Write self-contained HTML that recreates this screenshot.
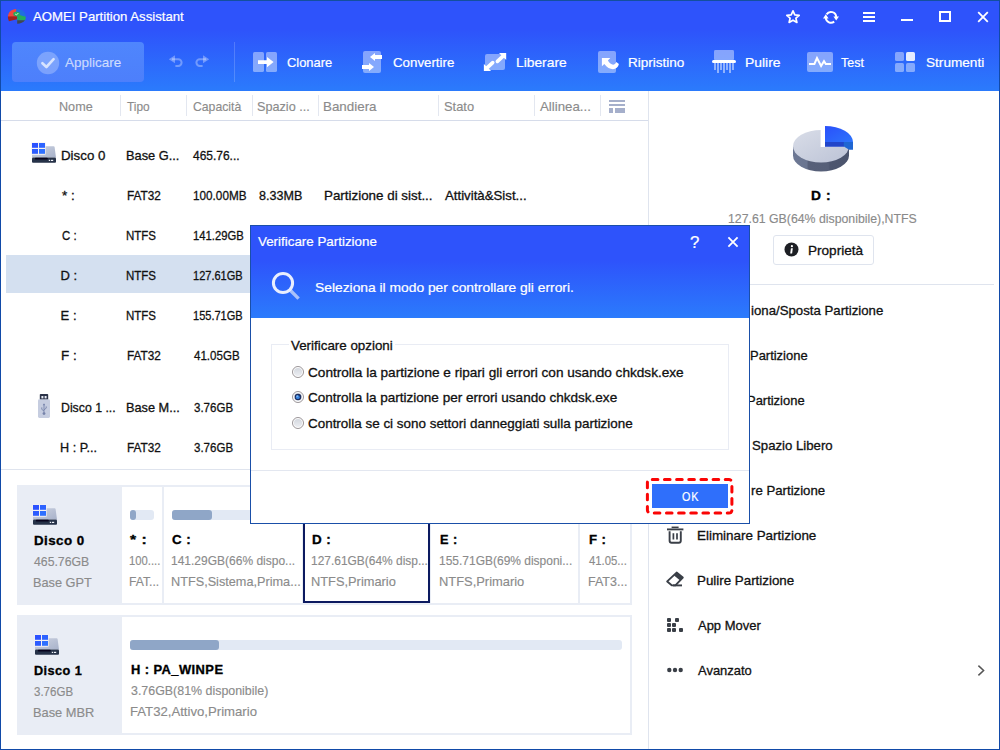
<!DOCTYPE html>
<html lang="it">
<head>
<meta charset="utf-8">
<title>AOMEI Partition Assistant</title>
<style>
*{box-sizing:border-box}
html,body{margin:0;padding:0}
body{width:1000px;height:750px;overflow:hidden;background:#fff;position:relative;font-family:"Liberation Sans",sans-serif;font-size:13px;color:#111}
.a{position:absolute}
.t{position:absolute;white-space:nowrap;line-height:16px;height:16px;transform-origin:0 50%;-webkit-text-stroke:.3px currentColor}
.w{color:#fff;-webkit-text-stroke:.2px currentColor}
.g{color:#8b8b8b;-webkit-text-stroke:.15px currentColor}
.b{font-weight:bold;color:#000}
#win{position:absolute;left:0;top:0;width:1000px;height:750px;border:1px solid #114aa8;border-top-color:#134f9f;overflow:hidden}
#hdr{position:absolute;left:1px;top:1px;width:998px;height:90px;background:linear-gradient(#2e53fb 0px,#2e53fb 28px,#2b7bfc 90px)}
</style>
<style id="tune">
#ttl{transform:scaleX(1.013);margin-left:0.0px;margin-top:0px}
#tb0{transform:scaleX(1.037);margin-left:0.5px;margin-top:1px}
#tb1{transform:scaleX(0.993);margin-left:-0.2px;margin-top:1px}
#tb2{transform:scaleX(1.023);margin-left:0.4px;margin-top:1px}
#tb3{transform:scaleX(1.062);margin-left:-1.3px;margin-top:1px}
#tb4{transform:scaleX(1.040);margin-left:-0.4px;margin-top:1px}
#tb5{transform:scaleX(1.069);margin-left:-0.5px;margin-top:1px}
#tb6{transform:scaleX(0.958);margin-left:0.0px;margin-top:1px}
#tb7{transform:scaleX(1.046);margin-left:-0.5px;margin-top:1px}
#h0{transform:scaleX(0.971);margin-left:-0.6px;margin-top:1px}
#h1{transform:scaleX(0.912);margin-left:0.7px;margin-top:1px}
#h2{transform:scaleX(0.940);margin-left:0.7px;margin-top:1px}
#h3{transform:scaleX(0.973);margin-left:-0.6px;margin-top:1px}
#h4{transform:scaleX(1.029);margin-left:-1.0px;margin-top:1px}
#h5{transform:scaleX(0.990);margin-left:-0.2px;margin-top:1px}
#h6{transform:scaleX(1.020);margin-left:0.0px;margin-top:1px}
#r0c0{transform:scaleX(1.024);margin-left:-0.4px;margin-top:1px}
#r0c1{transform:scaleX(0.985);margin-left:-0.6px;margin-top:1px}
#r0c2{transform:scaleX(0.920);margin-left:0.4px;margin-top:1px}
#r1c0{transform:scaleX(1.033);margin-left:0.6px;margin-top:1px}
#r1c1{transform:scaleX(0.906);margin-left:-0.5px;margin-top:1px}
#r1c2{transform:scaleX(0.903);margin-left:-0.3px;margin-top:1px}
#r1c3{transform:scaleX(0.967);margin-left:0.0px;margin-top:1px}
#r1c4{transform:scaleX(1.029);margin-left:-1.0px;margin-top:1px}
#r1c5{transform:scaleX(1.018);margin-left:0.0px;margin-top:1px}
#r2c0{transform:scaleX(0.875);margin-left:0.6px;margin-top:1px}
#r2c1{transform:scaleX(0.885);margin-left:-0.7px;margin-top:1px}
#r2c2{transform:scaleX(0.867);margin-left:-0.3px;margin-top:1px}
#r3c0{transform:scaleX(1.000);margin-left:-0.4px;margin-top:1px}
#r3c1{transform:scaleX(0.885);margin-left:-0.7px;margin-top:1px}
#r3c2{transform:scaleX(0.849);margin-left:-0.2px;margin-top:1px}
#r4c0{transform:scaleX(1.000);margin-left:-0.4px;margin-top:1px}
#r4c1{transform:scaleX(0.885);margin-left:-0.7px;margin-top:1px}
#r4c2{transform:scaleX(0.849);margin-left:-0.2px;margin-top:1px}
#r5c0{transform:scaleX(1.031);margin-left:-0.4px;margin-top:1px}
#r5c1{transform:scaleX(0.906);margin-left:-0.5px;margin-top:1px}
#r5c2{transform:scaleX(0.890);margin-left:0.6px;margin-top:1px}
#r6c0{transform:scaleX(0.946);margin-left:-0.3px;margin-top:1px}
#r6c1{transform:scaleX(0.981);margin-left:-0.6px;margin-top:1px}
#r6c2{transform:scaleX(0.886);margin-left:0.6px;margin-top:1px}
#r7c0{transform:scaleX(0.972);margin-left:-0.6px;margin-top:1px}
#r7c1{transform:scaleX(0.906);margin-left:-0.5px;margin-top:1px}
#r7c2{transform:scaleX(0.886);margin-left:0.6px;margin-top:1px}
#rp0{transform:scaleX(1.150);margin-left:0.2px;margin-top:0px}
#rp1{transform:scaleX(0.946);margin-left:-0.6px;margin-top:0px}
#rp2{transform:scaleX(1.044);margin-left:-0.6px;margin-top:1px}
#ri0{transform:scaleX(1.017);margin-left:0.2px;margin-top:1px}
#ri1{transform:scaleX(0.996);margin-left:-0.8px;margin-top:1px}
#ri2{transform:scaleX(0.996);margin-left:-3.6px;margin-top:1px}
#ri3{transform:scaleX(1.015);margin-left:1.2px;margin-top:1px}
#ri4{transform:scaleX(1.016);margin-left:0.2px;margin-top:1px}
#ri0p{transform:scaleX(0.977);margin-left:-0.3px;margin-top:1px}
#ri1p{transform:scaleX(1.006);margin-left:-0.3px;margin-top:1px}
#ri2p{transform:scaleX(0.984);margin-left:0.7px;margin-top:1px}
#ri3p{transform:scaleX(1.070);margin-left:0.7px;margin-top:1px}
#ri4p{transform:scaleX(1.006);margin-left:-0.3px;margin-top:1px}
#ri5{transform:scaleX(1.032);margin-left:-0.3px;margin-top:1px}
#ri6{transform:scaleX(1.027);margin-left:-0.3px;margin-top:1px}
#ri7{transform:scaleX(0.998);margin-left:0.7px;margin-top:1px}
#ri8{transform:scaleX(0.996);margin-left:0.7px;margin-top:1px}
#d0a{transform:scaleX(1.111);margin-left:0.7px;margin-top:0.5px}
#d0b{transform:scaleX(0.943);margin-left:0.7px;margin-top:1px}
#d0c{transform:scaleX(0.980);margin-left:-0.3px;margin-top:1px}
#p0a{transform:scaleX(1.308);margin-left:0.3px;margin-top:-0.5px}
#p0b{transform:scaleX(0.865);margin-left:-0.9px;margin-top:0px}
#p0c{transform:scaleX(0.935);margin-left:-0.9px;margin-top:0px}
#p1a{transform:scaleX(1.113);margin-left:0.0px;margin-top:-0.5px}
#p1b{transform:scaleX(0.923);margin-left:-0.9px;margin-top:0px}
#p1c{transform:scaleX(0.976);margin-left:-1.0px;margin-top:0px}
#p2a{transform:scaleX(1.119);margin-left:0.6px;margin-top:-0.5px}
#p2b{transform:scaleX(0.919);margin-left:-0.3px;margin-top:0px}
#p2c{transform:scaleX(0.987);margin-left:-0.4px;margin-top:0px}
#p3a{transform:scaleX(1.062);margin-left:0.0px;margin-top:-0.5px}
#p3b{transform:scaleX(0.922);margin-left:-0.9px;margin-top:0px}
#p3c{transform:scaleX(0.992);margin-left:-1.0px;margin-top:0px}
#p4a{transform:scaleX(1.100);margin-left:0.5px;margin-top:-0.5px}
#p4b{transform:scaleX(0.872);margin-left:0.5px;margin-top:0px}
#p4c{transform:scaleX(0.962);margin-left:-0.5px;margin-top:0px}
#d1a{transform:scaleX(1.058);margin-left:0.8px;margin-top:0.5px}
#d1b{transform:scaleX(0.886);margin-left:0.8px;margin-top:1px}
#d1c{transform:scaleX(0.987);margin-left:-0.2px;margin-top:1px}
#p5a{transform:scaleX(1.076);margin-left:0.5px;margin-top:-0.5px}
#p5b{transform:scaleX(0.955);margin-left:0.5px;margin-top:0px}
#p5c{transform:scaleX(1.012);margin-left:-0.5px;margin-top:0px}
#dg0{transform:scaleX(1.028);margin-left:0.5px;margin-top:0px}
#dgq{transform:scaleX(1.050);margin-left:-1.0px;margin-top:1px}
#dg1{transform:scaleX(1.063);margin-left:-0.4px;margin-top:1px}
#dg2{transform:scaleX(1.028);margin-left:0.0px;margin-top:0px}
#dr0{transform:scaleX(1.046);margin-left:-0.8px;margin-top:1px}
#dr1{transform:scaleX(1.041);margin-left:-0.8px;margin-top:1px}
#dr2{transform:scaleX(1.033);margin-left:-0.8px;margin-top:1px}
#dgok{transform:scaleX(0.830);margin-left:0.7px;margin-top:1px}
</style>
</head>
<body>
<div id="hdr"></div>
<!-- title bar -->
<svg class="a" style="left:7px;top:8px" width="20" height="17" viewBox="0 0 20 17">
 <path d="M9.3 0.9 C14.5 0.6 19 3.8 19 9 L9.3 9 Z" fill="#1f6fe0"/>
 <path d="M9.2 1 C4.5 1.2 1 4 0.9 9.2 L9.2 9.2 Z" fill="#f0483e"/>
 <path d="M0.9 8.6 L10 8.2 L10 11.2 L2 13.2 C1.2 12 0.9 10 0.9 8.6Z" fill="#a3231c"/>
 <path d="M6.2 5 C7.5 3.6 11 3.4 12.6 4.6 L13.2 7.2 L18.7 8.8 C18.9 10.5 18.5 11.6 17.8 12.5 L10.2 12.5 L10.2 8.6 L6.6 7.6 Z" fill="#25ad5c"/>
 <path d="M10.2 12.3 L17.9 12.3 C16.5 14.6 13 15.9 10.2 15.8 Z" fill="#414851"/>
 <path d="M8.2 6 L9.4 7 L11.4 5" stroke="#d8f0d8" stroke-width="1" fill="none"/>
</svg>
<div class="t w" id="ttl" style="left:33px;top:9px;font-size:13px">AOMEI Partition Assistant</div>
<svg class="a" style="left:784px;top:8px" width="18" height="18" viewBox="0 0 18 18"><path d="M9 2.9 L10.8 6.9 L15.2 7.3 L11.9 10.2 L12.9 14.4 L9 12.2 L5.1 14.4 L6.1 10.2 L2.8 7.3 L7.2 6.9 Z" fill="none" stroke="#fff" stroke-width="1.7" stroke-linejoin="round"/></svg>
<svg class="a" style="left:822px;top:8px" width="18" height="18" viewBox="0 0 18 18"><g fill="none" stroke="#fff" stroke-width="2"><path d="M4.6 6.4 A5.2 5.2 0 0 1 14.2 9"/><path d="M12.2 13.6 A5.2 5.2 0 0 1 3.8 10"/></g><path d="M1 10.4 L6.6 10.4 L3.8 6.2 Z M11.4 8.4 L17 8.4 L14.2 12.6 Z" fill="#fff"/></svg>
<div class="a" style="left:863px;top:12px;width:12px;height:2px;background:#fff;box-shadow:0 4px 0 #fff,0 8px 0 #fff"></div>
<div class="a" style="left:901px;top:19px;width:12px;height:2px;background:#fff"></div>
<div class="a" style="left:939px;top:11px;width:12px;height:11px;border:2px solid #fff"></div>
<svg class="a" style="left:977px;top:11px" width="12" height="12" viewBox="0 0 12 12"><path d="M1.2 1.2 L10.8 10.8 M10.8 1.2 L1.2 10.8" stroke="#fff" stroke-width="1.8"/></svg>

<!-- toolbar -->
<div class="a" style="left:12px;top:42px;width:132px;height:40px;border-radius:4px;background:linear-gradient(#4f86fd,#4d7ffb)"></div>
<svg class="a" style="left:36px;top:51px" width="24" height="24" viewBox="0 0 24 24"><circle cx="12" cy="12" r="11.2" fill="rgba(255,255,255,.26)"/><path d="M6.4 12.2 L10.4 16 L17.6 8.2" fill="none" stroke="rgba(255,255,255,.7)" stroke-width="2.6" stroke-linecap="round" stroke-linejoin="round"/></svg>
<div class="t" id="tb0" style="left:64px;top:54px;font-size:13px;color:rgba(255,255,255,.68);-webkit-text-stroke:.15px currentColor">Applicare</div>
<svg class="a" style="left:168px;top:54px" width="16" height="14" viewBox="0 0 16 14"><path d="M4 5.2 H10.2 A3.4 3.4 0 0 1 10.2 12 H7.4" fill="none" stroke="rgba(255,255,255,.33)" stroke-width="2"/><path d="M0.8 5.2 L7 1.2 L7 9.2 Z" fill="rgba(255,255,255,.33)"/></svg>
<svg class="a" style="left:194px;top:54px" width="16" height="14" viewBox="0 0 16 14"><path d="M12 5.2 H5.8 A3.4 3.4 0 0 0 5.8 12 H8.6" fill="none" stroke="rgba(255,255,255,.33)" stroke-width="2"/><path d="M15.2 5.2 L9 1.2 L9 9.2 Z" fill="rgba(255,255,255,.33)"/></svg>
<div class="a" style="left:234px;top:42px;width:1px;height:40px;background:rgba(255,255,255,.18)"></div>
<!-- Clonare -->
<svg class="a" style="left:253px;top:51px" width="24" height="22" viewBox="0 0 24 22"><rect x="0" y="1" width="11" height="20" rx="1.6" fill="rgba(255,255,255,.42)"/><rect x="13" y="1" width="11" height="20" rx="1.6" fill="rgba(255,255,255,.42)"/><path d="M5 9.2 H14 V6 L20.6 11.1 L14 16.2 V13 H5 Z" fill="#fff"/></svg>
<div class="t w" id="tb1" style="left:287px;top:54px;font-size:13px">Clonare</div>
<!-- Convertire -->
<svg class="a" style="left:361px;top:50px" width="22" height="24" viewBox="0 0 22 24"><rect x="2" y="1" width="18" height="22" rx="2" fill="rgba(255,255,255,.42)"/><path d="M21 5.1 H14 V3 L9 7 L14 11 V8.9 H21 Z" fill="#fff"/><path d="M1 15 H8 V13 L13 17 L8 21 V19 H1 Z" fill="#fff"/></svg>
<div class="t w" id="tb2" style="left:393px;top:54px;font-size:13px">Convertire</div>
<!-- Liberare -->
<svg class="a" style="left:483px;top:52px" width="24" height="20" viewBox="0 0 24 20"><rect x="2" y="2" width="20" height="16" rx="2" fill="rgba(255,255,255,.42)"/><path d="M16 0.9 H23.2 V8.1 Z" fill="#fff"/><path d="M20.6 3.6 L14.4 9.4" stroke="#fff" stroke-width="3.6" stroke-linecap="round"/><path d="M0.9 11.9 V19.1 H8.1 Z" fill="#fff"/><path d="M3.5 16.4 L9.7 10.6" stroke="#fff" stroke-width="3.6" stroke-linecap="round"/></svg>
<div class="t w" id="tb3" style="left:517px;top:54px;font-size:13px">Liberare</div>
<!-- Ripristino -->
<svg class="a" style="left:597px;top:50px" width="24" height="24" viewBox="0 0 24 24"><rect x="1" y="1" width="18" height="22" rx="2" fill="rgba(255,255,255,.42)"/><path d="M4.9 8 H13.3 L10.9 10.5 C13.4 14.6 17.2 16.6 19.3 12 L21.9 14 C20.6 20.8 12.4 21 7.3 14 L4.9 16.2 Z" fill="#fff"/></svg>
<div class="t w" id="tb4" style="left:628px;top:54px;font-size:13px">Ripristino</div>
<!-- Pulire -->
<svg class="a" style="left:712px;top:49px" width="24" height="25" viewBox="0 0 24 25"><rect x="2" y="1" width="20" height="10.4" rx="1.4" fill="rgba(255,255,255,.42)"/><g fill="rgba(255,255,255,.48)"><rect x="2" y="14" width="2" height="7"/><rect x="5" y="14" width="2" height="10"/><rect x="8" y="14" width="2" height="7"/><rect x="11" y="14" width="2" height="10"/><rect x="14" y="14" width="2" height="7"/><rect x="17" y="14" width="2" height="10"/><rect x="20" y="14" width="2" height="7"/></g><rect x="0" y="11" width="24" height="3.1" rx="1.5" fill="#fff"/></svg>
<div class="t w" id="tb5" style="left:745px;top:54px;font-size:13px">Pulire</div>
<!-- Test -->
<svg class="a" style="left:807px;top:52px" width="26" height="20" viewBox="0 0 26 20"><rect x="0" y="0" width="26" height="20" rx="2" fill="rgba(255,255,255,.42)"/><path d="M2 12 H7.4 L10 6 L14.1 14 L17 9.2 L18.8 12 H24" fill="none" stroke="#fff" stroke-width="2" stroke-linejoin="miter"/></svg>
<div class="t w" id="tb6" style="left:841px;top:54px;font-size:13px">Test</div>
<!-- Strumenti -->
<svg class="a" style="left:895px;top:52px" width="21" height="20" viewBox="0 0 21 20"><rect x="0" y="0" width="9" height="9" rx="1.6" fill="rgba(255,255,255,.42)"/><rect x="11" y="0" width="9" height="9" rx="1.6" fill="rgba(255,255,255,.88)"/><rect x="0" y="11" width="9" height="9" rx="1.6" fill="rgba(255,255,255,.42)"/><rect x="11" y="11" width="9" height="9" rx="1.6" fill="rgba(255,255,255,.42)"/></svg>
<div class="t w" id="tb7" style="left:926px;top:54px;font-size:13px">Strumenti</div>

<!-- table header -->
<div class="a" style="left:1px;top:120px;width:647px;height:1px;background:#d6dcea"></div>
<div class="a" style="left:648px;top:91px;width:1px;height:658px;background:#dfe4ee"></div>
<div class="a" style="left:120px;top:95px;width:1px;height:21px;background:#e3e7f0"></div>
<div class="a" style="left:186px;top:95px;width:1px;height:21px;background:#e3e7f0"></div>
<div class="a" style="left:252px;top:95px;width:1px;height:21px;background:#e3e7f0"></div>
<div class="a" style="left:318px;top:95px;width:1px;height:21px;background:#e3e7f0"></div>
<div class="a" style="left:438px;top:95px;width:1px;height:21px;background:#e3e7f0"></div>
<div class="a" style="left:534px;top:95px;width:1px;height:21px;background:#e3e7f0"></div>
<div class="a" style="left:600px;top:95px;width:1px;height:21px;background:#e3e7f0"></div>
<div class="t g" id="h0" style="left:60px;top:98px">Nome</div>
<div class="t g" id="h1" style="left:126px;top:98px">Tipo</div>
<div class="t g" id="h2" style="left:192px;top:98px">Capacità</div>
<div class="t g" id="h3" style="left:258px;top:98px">Spazio ...</div>
<div class="t g" id="h4" style="left:324px;top:98px">Bandiera</div>
<div class="t g" id="h5" style="left:444px;top:98px">Stato</div>
<div class="t g" id="h6" style="left:540px;top:98px">Allinea...</div>
<svg class="a" style="left:608px;top:100px" width="18" height="13" viewBox="0 0 18 13"><g fill="#a5afcb"><rect x="1" y="0" width="16" height="2"/><rect x="1" y="4" width="16" height="2"/><rect x="1" y="8" width="4" height="5"/><rect x="7" y="8" width="10" height="5"/></g></svg>
<!-- selected row -->
<div class="a" style="left:6px;top:255px;width:300px;height:38px;background:#d4e0f0"></div>
<div class="t" id="r0c0" style="left:61px;top:147px">Disco 0</div>
<div class="t" id="r0c1" style="left:127px;top:147px">Base G...</div>
<div class="t" id="r0c2" style="left:193px;top:147px">465.76...</div>
<div class="t" id="r1c0" style="left:61px;top:187px">* :</div>
<div class="t" id="r1c1" style="left:127px;top:187px">FAT32</div>
<div class="t" id="r1c2" style="left:193px;top:187px">100.00MB</div>
<div class="t" id="r1c3" style="left:259px;top:187px">8.33MB</div>
<div class="t" id="r1c4" style="left:325px;top:187px">Partizione di sist...</div>
<div class="t" id="r1c5" style="left:445px;top:187px">Attività&amp;Sist...</div>
<div class="t" id="r2c0" style="left:61px;top:227px">C :</div>
<div class="t" id="r2c1" style="left:127px;top:227px">NTFS</div>
<div class="t" id="r2c2" style="left:193px;top:227px">141.29GB</div>
<div class="t" id="r3c0" style="left:61px;top:267px">D :</div>
<div class="t" id="r3c1" style="left:127px;top:267px">NTFS</div>
<div class="t" id="r3c2" style="left:193px;top:267px">127.61GB</div>
<div class="t" id="r4c0" style="left:61px;top:307px">E :</div>
<div class="t" id="r4c1" style="left:127px;top:307px">NTFS</div>
<div class="t" id="r4c2" style="left:193px;top:307px">155.71GB</div>
<div class="t" id="r5c0" style="left:61px;top:347px">F :</div>
<div class="t" id="r5c1" style="left:127px;top:347px">FAT32</div>
<div class="t" id="r5c2" style="left:193px;top:347px">41.05GB</div>
<div class="t" id="r6c0" style="left:61px;top:399px">Disco 1 ...</div>
<div class="t" id="r6c1" style="left:127px;top:399px">Base M...</div>
<div class="t" id="r6c2" style="left:193px;top:399px">3.76GB</div>
<div class="t" id="r7c0" style="left:61px;top:439px">H : P...</div>
<div class="t" id="r7c1" style="left:127px;top:439px">FAT32</div>
<div class="t" id="r7c2" style="left:193px;top:439px">3.76GB</div>
<svg class="a" style="left:31px;top:142px" width="26" height="22" viewBox="0 0 26 22">
<defs><linearGradient id="dg" x1="0" y1="0" x2="1" y2="1"><stop offset="0" stop-color="#ced4e2"/><stop offset="1" stop-color="#a8b2ca"/></linearGradient></defs>
<path d="M13.6 4.2 H22.6 Q23.4 4.2 23.6 5 L25 15.4 H1 V12.6 H13.6 Z" fill="url(#dg)"/>
<rect x="0.4" y="0.4" width="14.2" height="12.2" fill="#f3f1f4"/>
<rect x="1" y="15.4" width="24" height="5.4" rx="1" fill="#263248"/>
<rect x="3.8" y="15.8" width="13" height="1.8" rx=".8" fill="#07031c"/>
<rect x="17.8" y="17.8" width="1.2" height="1.2" fill="#f0f3fa"/><rect x="19.8" y="17.8" width="2.4" height="1.2" fill="#f0f3fa"/>
<rect x="1" y="1" width="6" height="4.8" fill="#2b52ff"/><rect x="8" y="1" width="6" height="4.8" fill="#2d63ff"/>
<rect x="1" y="7" width="6" height="4.8" fill="#2c5cff"/><rect x="8" y="7" width="6" height="4.8" fill="#2e70ff"/>
</svg>
<svg class="a" style="left:37px;top:393px" width="14" height="26" viewBox="0 0 14 26">
<rect x="2.8" y="1" width="8.4" height="6" rx="0.8" fill="#2b3348"/>
<rect x="4.4" y="3" width="2" height="2.4" fill="#e8ecf5"/><rect x="7.6" y="3" width="2" height="2.4" fill="#e8ecf5"/>
<rect x="1" y="6.2" width="12" height="18.8" rx="1.4" fill="#c6cde0"/>
<g stroke="#7683aa" stroke-width="0.9" fill="none"><path d="M7 11 V20"/><path d="M4.8 14.4 V16.4 L7 18"/><path d="M9.2 13.4 V15.2 L7 16.8"/></g>
<circle cx="7" cy="20.6" r="1.4" fill="#7683aa"/><path d="M5.8 12.2 L7 10.2 L8.2 12.2 Z" fill="#7683aa"/>
</svg>
<div class="a" style="left:1px;top:469px;width:647px;height:1px;background:#dfe4ee"></div>
<!-- right panel -->
<svg class="a" style="left:788px;top:122px" width="70" height="54" viewBox="0 0 70 54">
<defs>
<linearGradient id="pg1" x1="0" y1="0" x2="1" y2="1"><stop offset="0" stop-color="#d9dde8"/><stop offset="1" stop-color="#bcc3d6"/></linearGradient>
<linearGradient id="pg2" x1="0" y1="0" x2="1" y2="0"><stop offset="0" stop-color="#6d7894"/><stop offset="0.25" stop-color="#6a7590"/><stop offset="0.27" stop-color="#576079"/><stop offset="0.63" stop-color="#565f78"/><stop offset="0.66" stop-color="#4d566f"/><stop offset="1" stop-color="#4b546d"/></linearGradient>
<linearGradient id="pg3" x1="0" y1="0" x2="1" y2="1"><stop offset="0" stop-color="#2a50fb"/><stop offset="1" stop-color="#2d74fb"/></linearGradient>
</defs>
<path d="M5 24.2 V33.4 A28 16.2 0 0 0 61 33.4 V24.2 Z" fill="url(#pg2)"/>
<ellipse cx="33" cy="24.2" rx="28" ry="16.2" fill="url(#pg1)"/>
<rect x="32.6" y="2" width="34" height="23" fill="#fff"/>
<path d="M37 20 H56 V24.8 H37 Z" fill="#2145c9"/>
<path d="M55.8 20 H65 V27.8 H61.2 L55.8 24.6 Z" fill="#1f66d2"/>
<path d="M37 4 A28 16 0 0 1 65 20 H37 Z" fill="url(#pg3)"/>
</svg>
<div class="t b" id="rp0" style="left:811px;top:188px;font-size:12px;letter-spacing:.5px">D :</div>
<div class="t g" id="rp1" style="left:729px;top:211px;color:#8a8a8a">127.61 GB(64% disponibile),NTFS</div>
<div class="a" style="left:773px;top:235px;width:101px;height:30px;border:1px solid #dfe4ee;border-radius:3px;background:#fff"></div>
<svg class="a" style="left:784px;top:242px" width="15" height="15" viewBox="0 0 15 15"><circle cx="7.5" cy="7.5" r="7" fill="#1d1f24"/><rect x="6.6" y="6.2" width="1.9" height="5.2" fill="#fff" transform="skewX(-8) translate(1.2 0)"/><circle cx="7.9" cy="4.2" r="1.1" fill="#fff"/></svg>
<div class="t" id="rp2" style="left:809px;top:242px;font-size:13px">Proprietà</div>
<div class="a" style="left:664px;top:284px;width:330px;height:1px;background:#dfe4ee"></div>
<div class="t" id="ri0p" style="left:697px;top:302px;font-size:13px">Ridimens</div><div class="t" id="ri0" style="left:751px;top:302px;font-size:13px">iona/Sposta Partizione</div>
<div class="t" id="ri1p" style="left:697px;top:347px;font-size:13px">Dividere </div><div class="t" id="ri1" style="left:751px;top:347px;font-size:13px">Partizione</div>
<div class="t" id="ri2p" style="left:697px;top:392px;font-size:13px">Clonare </div><div class="t" id="ri2" style="left:751px;top:392px;font-size:13px">Partizione</div>
<div class="t" id="ri3p" style="left:697px;top:437px;font-size:13px">Allocare </div><div class="t" id="ri3" style="left:751px;top:437px;font-size:13px">Spazio Libero</div>
<div class="t" id="ri4p" style="left:697px;top:482px;font-size:13px">Formatta</div><div class="t" id="ri4" style="left:751px;top:482px;font-size:13px">re Partizione</div>
<div class="t" id="ri5" style="left:697px;top:527px;font-size:13px">Eliminare Partizione</div>
<div class="t" id="ri6" style="left:697px;top:572px;font-size:13px">Pulire Partizione</div>
<div class="t" id="ri7" style="left:697px;top:617px;font-size:13px">App Mover</div>
<div class="t" id="ri8" style="left:697px;top:662px;font-size:13px">Avanzato</div>
<svg class="a" style="left:666px;top:526px" width="18" height="19" viewBox="0 0 18 19"><g fill="none" stroke="#3a3f47" stroke-width="1.9"><path d="M1 3.4 H17.4"/><path d="M5.6 1.3 H12.6" stroke-width="1.5"/><path d="M3.6 5.2 V14.8 Q3.6 16.8 5.6 16.8 H12.8 Q14.8 16.8 14.8 14.8 V5.2"/><path d="M7.4 7.2 V13.6 M11 7.2 V13.6" stroke-width="1.7"/></g></svg>
<svg class="a" style="left:665px;top:571px" width="20" height="17" viewBox="0 0 20 17"><path d="M11.6 1.6 L17.8 6.6 L10.4 14.4 H7 L2.2 10.4 Z" fill="none" stroke="#3a3f47" stroke-width="1.9" stroke-linejoin="round"/><path d="M11.6 1.6 L17.8 6.6 L15.2 9.4 L9 4.4 Z" fill="#3a3f47"/><path d="M8 14.4 H17" stroke="#3a3f47" stroke-width="1.9"/></svg>
<div class="a" style="left:667px;top:618px;width:4px;height:4px;border-radius:1px;background:#3a3f47"></div>
<div class="a" style="left:675px;top:618px;width:4px;height:4px;border-radius:1px;background:#3a3f47"></div>
<div class="a" style="left:667px;top:623px;width:4px;height:4px;border-radius:1px;background:#3a3f47"></div>
<div class="a" style="left:672px;top:623px;width:4px;height:4px;border-radius:1px;background:#3a3f47"></div>
<div class="a" style="left:667px;top:628px;width:4px;height:4px;border-radius:1px;background:#3a3f47"></div>
<div class="a" style="left:672px;top:628px;width:4px;height:4px;border-radius:1px;background:#3a3f47"></div>
<div class="a" style="left:679px;top:628px;width:4px;height:4px;border-radius:1px;background:#3a3f47"></div>



<svg class="a" style="left:666px;top:667px" width="18" height="6" viewBox="0 0 18 6"><circle cx="3.3" cy="3" r="2.2" fill="#3a3f47"/><circle cx="9" cy="3" r="2.2" fill="#3a3f47"/><circle cx="14.7" cy="3" r="2.2" fill="#3a3f47"/></svg>
<svg class="a" style="left:976px;top:664px" width="10" height="13" viewBox="0 0 10 13"><path d="M2.4 1.6 L7.6 6.5 L2.4 11.4" fill="none" stroke="#555" stroke-width="1.5"/></svg>
<!-- disk map -->
<div class="a" style="left:17px;top:485px;width:615px;height:120px;background:#e9edf5"></div>
<div class="a" style="left:122px;top:487px;width:40px;height:116px;background:#fff"></div>
<div class="a" style="left:164px;top:487px;width:138px;height:116px;background:#fff"></div>
<div class="a" style="left:304px;top:487px;width:125px;height:116px;background:#fff"></div>
<div class="a" style="left:431px;top:487px;width:147px;height:116px;background:#fff"></div>
<div class="a" style="left:580px;top:487px;width:50px;height:116px;background:#fff"></div>
<div class="a" style="left:303px;top:486px;width:127px;height:117px;border:2px solid #0c1a60;background:#fff"></div>
<svg class="a" style="left:32px;top:504px" width="26" height="22" viewBox="0 0 26 22">
<path d="M13.6 4.2 H22.6 Q23.4 4.2 23.6 5 L25 15.4 H1 V12.6 H13.6 Z" fill="url(#dg)"/>
<rect x="0.4" y="0.4" width="14.2" height="12.2" fill="#f3f1f4"/>
<rect x="1" y="15.4" width="24" height="5.4" rx="1" fill="#263248"/>
<rect x="3.8" y="15.8" width="13" height="1.8" rx=".8" fill="#07031c"/>
<rect x="17.8" y="17.8" width="1.2" height="1.2" fill="#f0f3fa"/><rect x="19.8" y="17.8" width="2.4" height="1.2" fill="#f0f3fa"/>
<rect x="1" y="1" width="6" height="4.8" fill="#2b52ff"/><rect x="8" y="1" width="6" height="4.8" fill="#2d63ff"/>
<rect x="1" y="7" width="6" height="4.8" fill="#2c5cff"/><rect x="8" y="7" width="6" height="4.8" fill="#2e70ff"/>
</svg>
<div class="t b" id="d0a" style="left:33px;top:532px;font-size:12px;letter-spacing:.4px">Disco 0</div>
<div class="t g" id="d0b" style="left:33px;top:553px">465.76GB</div>
<div class="t g" id="d0c" style="left:33px;top:574px">Base GPT</div>
<div class="a" style="left:130px;top:510px;width:24px;height:10px;border-radius:3px;background:#e2e9f4"><div style="width:6px;height:10px;border-radius:3px;background:#8fa6c7"></div></div>
<div class="a" style="left:172px;top:510px;width:122px;height:10px;border-radius:3px;background:#e2e9f4"><div style="width:40px;height:10px;border-radius:3px;background:#8fa6c7"></div></div>
<div class="t b" id="p0a" style="left:130px;top:532px;font-size:12px;letter-spacing:.4px">* :</div>
<div class="t g" id="p0b" style="left:130px;top:553px">100....</div>
<div class="t g" id="p0c" style="left:130px;top:574px">FAT...</div>
<div class="t b" id="p1a" style="left:172px;top:532px;font-size:12px;letter-spacing:.4px">C :</div>
<div class="t g" id="p1b" style="left:172px;top:553px">141.29GB(66% dispo...</div>
<div class="t g" id="p1c" style="left:172px;top:574px">NTFS,Sistema,Prima...</div>
<div class="t b" id="p2a" style="left:311px;top:532px;font-size:12px;letter-spacing:.4px">D :</div>
<div class="t g" id="p2b" style="left:311px;top:553px">127.61GB(64% disp...</div>
<div class="t g" id="p2c" style="left:311px;top:574px">NTFS,Primario</div>
<div class="t b" id="p3a" style="left:440px;top:532px;font-size:12px;letter-spacing:.4px">E :</div>
<div class="t g" id="p3b" style="left:440px;top:553px">155.71GB(69% disponi...</div>
<div class="t g" id="p3c" style="left:440px;top:574px">NTFS,Primario</div>
<div class="t b" id="p4a" style="left:588px;top:532px;font-size:12px;letter-spacing:.4px">F :</div>
<div class="t g" id="p4b" style="left:588px;top:553px">41.05...</div>
<div class="t g" id="p4c" style="left:588px;top:574px">FAT3...</div>
<div class="a" style="left:17px;top:615px;width:615px;height:120px;background:#e9edf5"></div>
<div class="a" style="left:122px;top:617px;width:508px;height:116px;background:#fff"></div>
<svg class="a" style="left:34px;top:634px" width="26" height="22" viewBox="0 0 26 22">
<path d="M13.6 4.2 H22.6 Q23.4 4.2 23.6 5 L25 15.4 H1 V12.6 H13.6 Z" fill="url(#dg)"/>
<rect x="0.4" y="0.4" width="14.2" height="12.2" fill="#f3f1f4"/>
<rect x="1" y="15.4" width="24" height="5.4" rx="1" fill="#263248"/>
<rect x="3.8" y="15.8" width="13" height="1.8" rx=".8" fill="#07031c"/>
<rect x="17.8" y="17.8" width="1.2" height="1.2" fill="#f0f3fa"/><rect x="19.8" y="17.8" width="2.4" height="1.2" fill="#f0f3fa"/>
<rect x="1" y="1" width="6" height="4.8" fill="#2b52ff"/><rect x="8" y="1" width="6" height="4.8" fill="#2d63ff"/>
<rect x="1" y="7" width="6" height="4.8" fill="#2c5cff"/><rect x="8" y="7" width="6" height="4.8" fill="#2e70ff"/>
</svg>
<div class="t b" id="d1a" style="left:33px;top:662px;font-size:12px;letter-spacing:.4px">Disco 1</div>
<div class="t g" id="d1b" style="left:33px;top:683px">3.76GB</div>
<div class="t g" id="d1c" style="left:33px;top:704px">Base MBR</div>
<div class="a" style="left:130px;top:640px;width:492px;height:10px;border-radius:3px;background:#e2e9f4"><div style="width:89px;height:10px;border-radius:3px;background:#8fa6c7"></div></div>
<div class="t b" id="p5a" style="left:130px;top:662px;font-size:12px;letter-spacing:.4px">H : PA_WINPE</div>
<div class="t g" id="p5b" style="left:130px;top:683px">3.76GB(81% disponibile)</div>
<div class="t g" id="p5c" style="left:130px;top:704px">FAT32,Attivo,Primario</div>
<!-- dialog -->
<div class="a" style="left:250px;top:225px;width:500px;height:299px;background:#fff;border:1px solid #1a4fa8"></div>
<div class="a" style="left:251px;top:226px;width:498px;height:92px;background:linear-gradient(#2e53fb 0px,#2e53fb 34px,#2b7bfc 92px)"></div>
<div class="t w" id="dg0" style="left:257px;top:234px">Verificare Partizione</div>
<div class="t w" id="dgq" style="left:691px;top:234px;font-size:16px">?</div>
<svg class="a" style="left:727px;top:236px" width="12" height="12" viewBox="0 0 12 12"><path d="M1.4 1.4 L10.6 10.6 M10.6 1.4 L1.4 10.6" stroke="#fff" stroke-width="1.8"/></svg>
<svg class="a" style="left:270px;top:270px" width="32" height="32" viewBox="0 0 32 32"><path d="M20 20 L28.6 28.6" stroke="#a9c1f9" stroke-width="3.4"/><circle cx="13" cy="13" r="9.6" fill="none" stroke="#e9eefe" stroke-width="3"/></svg>
<div class="t w" id="dg1" style="left:315px;top:279px">Seleziona il modo per controllare gli errori.</div>
<div class="a" style="left:271px;top:344px;width:458px;height:106px;border:1px solid #e9ecf4"></div>
<div class="a" style="left:289px;top:338px;width:106px;height:14px;background:#fff"></div>
<div class="t" id="dg2" style="left:291px;top:338px">Verificare opzioni</div>
<svg class="a" style="left:291px;top:365px" width="14" height="14" viewBox="0 0 14 14"><defs><linearGradient id="rg0" x1="0" y1="0" x2="0" y2="1"><stop offset="0" stop-color="#d3d7de"/><stop offset="1" stop-color="#eceef2"/></linearGradient></defs><circle cx="7" cy="7" r="5.5" fill="#fff" stroke="#8f898c" stroke-width="0.9"/><circle cx="7" cy="7" r="4.1" fill="url(#rg0)"/></svg>
<div class="t" id="dr0" style="left:309px;top:364px">Controlla la partizione e ripari gli errori con usando chkdsk.exe</div>
<svg class="a" style="left:291px;top:390px" width="14" height="14" viewBox="0 0 14 14"><defs><linearGradient id="rg1" x1="0" y1="0" x2="0" y2="1"><stop offset="0" stop-color="#d3d7de"/><stop offset="1" stop-color="#eceef2"/></linearGradient></defs><circle cx="7" cy="7" r="5.5" fill="#fff" stroke="#8f898c" stroke-width="0.9"/><circle cx="7" cy="7" r="4.1" fill="url(#rg1)"/><circle cx="7" cy="7" r="3.3" fill="#1c2e60"/><circle cx="6.8" cy="7.2" r="1.9" fill="#3a86e2"/><circle cx="6.2" cy="6.2" r="0.9" fill="#7db8f4"/></svg>
<div class="t" id="dr1" style="left:309px;top:389px">Controlla la partizione per errori usando chkdsk.exe</div>
<svg class="a" style="left:291px;top:416px" width="14" height="14" viewBox="0 0 14 14"><defs><linearGradient id="rg2" x1="0" y1="0" x2="0" y2="1"><stop offset="0" stop-color="#d3d7de"/><stop offset="1" stop-color="#eceef2"/></linearGradient></defs><circle cx="7" cy="7" r="5.5" fill="#fff" stroke="#8f898c" stroke-width="0.9"/><circle cx="7" cy="7" r="4.1" fill="url(#rg2)"/></svg>
<div class="t" id="dr2" style="left:309px;top:415px">Controlla se ci sono settori danneggiati sulla partizione</div>
<div class="a" style="left:251px;top:470px;width:498px;height:1px;background:#e3e7f0"></div>
<div class="a" style="left:652px;top:484px;width:76px;height:24px;background:#2f6ffb"></div>
<div class="t w" id="dgok" style="left:681px;top:488px;letter-spacing:1px">OK</div>
<svg class="a" style="left:644px;top:476px" width="92" height="41" viewBox="0 0 92 41"><rect x="3.4" y="3.5" width="84.5" height="33.6" rx="3" fill="none" stroke="#fa0505" stroke-width="3" stroke-dasharray="5.6 6.56" stroke-dashoffset="-1.9" stroke-linecap="round"/></svg>
<div id="win"></div>
</body>
</html>
